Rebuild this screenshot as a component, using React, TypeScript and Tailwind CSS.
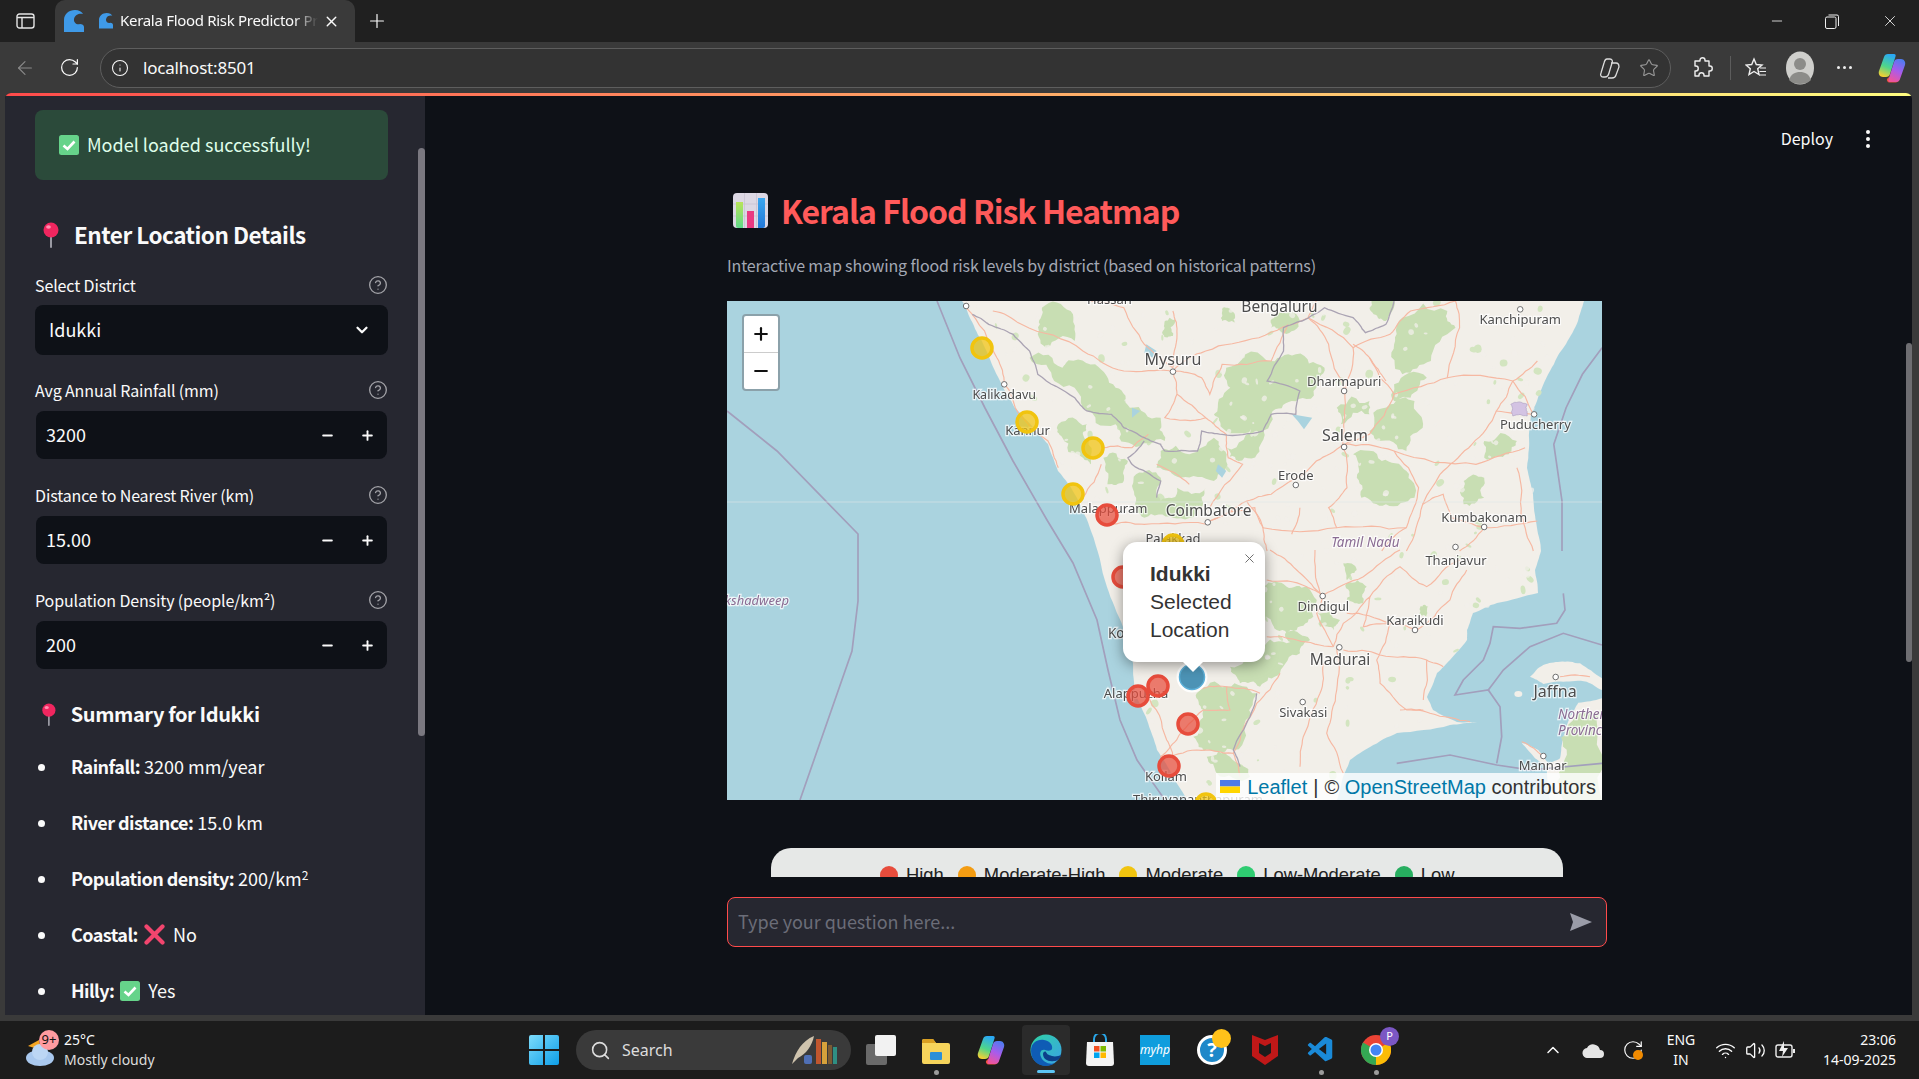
import { ArrowLeft, ChevronDown, ChevronUp, CircleHelp, Info, Minus, Plus, RotateCw, Search, Star, Volume2, Wifi, X } from "lucide-react";
import { VscVscode } from "react-icons/vsc";

type Pt = [number, number];

// two crops of the map were used to read coordinates, these put them back in map pixels
const a = (x: number, y: number): Pt => [233 + x / 2.442, y / 3];
const b = (x: number, y: number): Pt => [403 + x / 3, 249 + y / 3];
const parse = (s: string, f: (x: number, y: number) => Pt) =>
  s.split(" ").map((p) => {
    const [x, y] = p.split(",").map(Number);
    return f(x, y);
  });
const A = (s: string) => parse(s, a);
const B = (s: string) => parse(s, b);
const str = (p: Pt[]) => p.map(([x, y]) => `${x.toFixed(1)},${y.toFixed(1)}`).join(" ");

function rng(seed: number) {
  let s = seed;
  return () => (s = (s * 16807) % 2147483647) / 2147483647;
}

// wobble a straight outline so it reads like map data
function rough(p: Pt[], amp: number, seed: number, closed = true) {
  const r = rng(seed + 11);
  let out = p;
  for (let it = 0; it < 3; it++) {
    const next: Pt[] = [];
    for (let i = 0; i < out.length; i++) {
      const u = out[i];
      const v = out[(i + 1) % out.length];
      next.push(u);
      if (!closed && i === out.length - 1) break;
      const dx = v[0] - u[0];
      const dy = v[1] - u[1];
      const k = (r() - 0.5) * amp;
      next.push([(u[0] + v[0]) / 2 - dy * k, (u[1] + v[1]) / 2 + dx * k]);
    }
    out = next;
  }
  return str(out);
}

const land: Pt[] = [
  [235, 0], [239, 7], [247, 25], [258, 47], [268, 70], [278, 90], [288, 107], [307, 127], [321, 143], [331, 170], [350, 197], [364, 230],
  [380, 286], [396, 326], [406, 362], [408, 392], [420, 419], [430, 449], [446, 476], [460, 499],
  [610, 499], [616, 476], [623, 459], [643, 446], [670, 432], [723, 424], [750, 421], [730, 421], [706, 409], [700, 396], [710, 372], [723, 359], [740, 339], [740, 329], [746, 312], [770, 302], [811, 292], [808, 269],
  [814, 250], [810, 227], [806, 193], [800, 167], [802, 147], [804, 113], [810, 100], [823, 70], [839, 43], [851, 20], [857, 0],
];
const jaffna = B("1200,380 1240,345 1290,335 1350,340 1416,385 1416,420 1370,395 1300,395 1240,402");
const lanka = B("1416,445 1345,458 1320,500 1300,560 1290,625 1255,640 1225,600 1175,578 1215,625 1250,650 1260,750 1416,750");

const forests: Pt[][] = [
  A("170,170 250,200 330,190 380,260 415,320 490,350 500,420 420,430 380,370 300,320 230,240"),
  A("240,370 310,370 300,400 320,490 300,470 250,410"),
  A("200,20 270,30 280,120 210,140 195,70"),
  A("650,200 750,180 820,160 890,200 870,260 810,300 760,340 730,440 680,480 650,440 720,370 640,380 620,340 660,260"),
  A("490,450 560,460 620,410 650,470 620,540 540,530 480,500"),
  A("350,470 410,480 400,540 360,550"),
  A("430,520 490,530 490,600 530,560 600,560 590,620 520,650 450,650 430,590"),
  A("1080,50 1190,30 1210,80 1150,180 1080,220 1060,130"),
  A("1000,390 1050,310 1110,300 1130,380 1090,450 1020,420"),
  A("960,460 1030,480 1090,510 1110,590 1040,610 980,590 970,520"),
  A("920,320 1000,300 1000,340 930,370"),
  A("1060,250 1140,230 1100,290 1060,300"),
  A("1280,420 1360,420 1340,460 1280,470"),
  A("1230,540 1280,530 1280,590 1230,610"),
  A("500,60 525,55 520,105 495,100"),
  A("770,40 830,60 790,95 760,80"),
  A("640,25 665,30 670,65 640,60"),
  A("1005,0 1060,0 1040,60 1010,40"),
  B("400,110 470,110 530,110 550,200 500,240 440,240 400,200"),
  B("560,190 630,210 610,240 570,230"),
  B("640,40 680,60 650,90"),
  B("650,100 710,110 700,160 650,150"),
  B("470,245 520,270 500,290"),
  B("380,300 470,280 540,270 510,310 450,370 390,410 330,400 300,350"),
  B("200,430 290,410 380,430 360,500 310,600 240,600 190,560 220,480"),
  B("230,620 300,620 360,680 260,670"),
  B("1310,540 1416,480 1416,750 1300,750 1300,640"),
  B("870,170 895,170 890,200 870,195"),
];

const roadsA = [
  "15,20 90,170 110,250 135,320 215,420 240,500",
  "80,30 150,70 300,150 400,210 520,210",
  "520,210 530,280 600,350 650,400 655,470 690,490 610,620",
  "520,210 600,150 730,110 850,50 870,0",
  "520,210 590,230 610,280 640,190 760,180 800,70",
  "520,30 530,100 520,200",
  "320,0 400,20 450,130 520,200",
  "850,50 900,130 940,270 935,430 870,480 760,580 700,600 610,660",
  "850,50 960,140 1050,100 1100,30 1210,0",
  "960,140 940,270",
  "960,130 1000,170 1040,240",
  "1210,0 1220,80 1190,230 1060,280 1000,400 940,430",
  "1190,230 1350,240 1410,180",
  "1350,240 1310,330 1400,340",
  "1350,240 1400,340",
  "935,430 1060,450 1260,490 1380,440",
  "935,430 945,560 900,620 920,680 1090,680",
  "1060,450 1120,560 1090,680 1030,750",
  "1310,330 1250,430 1180,510 1130,610 1090,750",
  "1130,610 1180,580 1200,650 1280,680 1410,660",
  "1280,680 1220,750",
  "610,660 720,620 740,680 920,680",
  "700,600 740,680 750,750",
  "830,620 810,700",
  "350,440 420,440 460,400",
  "345,490 300,590",
  "360,670 450,670 600,670",
  "480,490 560,550",
  "1360,500 1370,640 1400,750",
  "600,350 500,350 530,280",
  "1060,280 1000,170",
];
const roadsB = [
  "410,90 530,110 580,135 700,80 810,0",
  "420,0 500,60 570,130 555,0",
  "580,135 560,190 610,290",
  "410,260 500,270 610,290",
  "610,290 640,220 720,140 700,230 780,220",
  "720,140 810,50 890,110 990,30",
  "650,190 780,220 860,240 960,150 1010,60",
  "780,220 740,330 750,400 830,480 880,480",
  "640,300 750,315 890,330 940,350",
  "620,290 620,420 590,550 640,670",
  "580,340 570,430 520,560 510,650",
  "450,370 380,460 310,610 200,600 90,620",
  "190,420 290,410 300,480 220,480 140,570 90,620",
  "290,410 390,430",
  "50,430 110,570 130,620",
  "1175,575 1240,620",
  "1290,380 1380,380",
  "810,480 900,490 1020,515",
  "890,330 880,450",
  "310,610 330,680",
];

const labels: [string, number, number, number, boolean?, string?][] = [
  ["Hassan", ...a(365, 8), 13],
  ["Bengaluru", ...a(780, 32), 15.5],
  ["Kanchipuram", ...a(1368, 68), 13],
  ["Mysuru", ...a(520, 192), 16],
  ["Dharmapuri", ...a(938, 255), 13],
  ["Kalikadavu", ...a(108, 295), 12.5],
  ["Kannur", ...a(165, 401), 13],
  ["Salem", ...a(940, 419), 16],
  ["Puducherry", ...a(1405, 384), 13],
  ["Erode", ...a(820, 536), 13],
  ["Malappuram", ...a(362, 636), 13],
  ["Coimbatore", ...a(607, 646), 15.5],
  ["Kumbakonam", ...a(1280, 664), 13],
  ["Palakkad", ...a(520, 727), 13],
  ["Tamil Nadu", ...a(990, 738), 13.5, true],
  ["Thanjavur", ...b(978, 44), 13],
  ["Dindigul", ...b(580, 183), 13],
  ["Karaikudi", ...b(855, 226), 13],
  ["Madurai", ...b(630, 344), 15.5],
  ["Sivakasi", ...b(520, 500), 13],
  ["Jaffna", ...b(1275, 442), 16],
  ["Northern", 831, 418, 13.5, true, "start"],
  ["Province", 831, 434, 13.5, true, "start"],
  ["Mannar", ...b(1238, 661), 13],
  ["Kollam", ...b(108, 693), 13],
  ["Alappuzha", 409, 397, 13],
  ["Kochi", 381, 337, 13.5, false, "start"],
  ["Lakshadweep", 62, 304, 13, true, "end"],
  ["Thiruvananthapuram", 406, 503, 13, false, "start"],
];

const towns: Pt[] = [
  a(520, 212), a(938, 270), a(938, 438), a(820, 552), a(108, 250), a(1402, 340), a(1280, 678), a(605, 664), a(15, 15), a(1368, 25), a(1210, 738),
  b(578, 138), b(855, 240), b(628, 292), b(518, 456), b(1277, 381), b(1240, 618),
];

// centres in page pixels, map starts at 727,301
const markers: [number, number, string][] = [
  [982, 348, "#f1c40f"],
  [1027, 422, "#f1c40f"],
  [1093, 448, "#f1c40f"],
  [1073, 494, "#f1c40f"],
  [1107, 515, "#e74c3c"],
  [1173, 545, "#f1c40f"],
  [1123, 577, "#e74c3c"],
  [1158, 686, "#e74c3c"],
  [1138, 696, "#e74c3c"],
  [1188, 724, "#e74c3c"],
  [1169, 766, "#e74c3c"],
  [1206, 804, "#f1c40f"],
];

function inLand(x: number, y: number) {
  let hit = false;
  for (let i = 0, j = land.length - 1; i < land.length; j = i++) {
    const [xi, yi] = land[i];
    const [xj, yj] = land[j];
    if (yi > y !== yj > y && x < ((xj - xi) * (y - yi)) / (yj - yi) + xi) hit = !hit;
  }
  return hit;
}

function specks(seed: number, count: number, size: number) {
  const r = rng(seed);
  const out: [number, number, number, number, number][] = [];
  for (let i = 0; i < count; i++) {
    const x = 240 + r() * 580;
    const y = r() * 499;
    const rx = 1 + r() * size;
    const ry = 1 + r() * size;
    const rot = r() * 180;
    if (inLand(x, y)) out.push([x, y, rx, ry, rot]);
  }
  return out;
}

function MapArt() {
  return (
    <svg width="875" height="499" viewBox="0 0 875 499" className="block">
      <defs>
        <filter id="soft" x="0" y="0" width="100%" height="100%">
          <feGaussianBlur stdDeviation="0.45" />
        </filter>
      </defs>
      <rect width="875" height="499" fill="#aad3df" />
      <g filter="url(#soft)">
        <polygon points={rough(land, 0.06, 3)} fill="#f2efe9" />
        <polygon points={rough(jaffna, 0.1, 5)} fill="#f2efe9" />
        <polygon points={rough(lanka, 0.06, 6)} fill="#f2efe9" />
        <ellipse cx={b(1165, 432)[0]} cy={b(1165, 432)[1]} rx="4" ry="3" fill="#f2efe9" />
        {specks(4242, 170, 3.4).map(([x, y, rx, ry, rot], i) => (
          <ellipse key={i} cx={x} cy={y} rx={rx} ry={ry} transform={`rotate(${rot} ${x} ${y})`} fill="#d3e5c0" />
        ))}
        {forests.map((f, i) => (
          <polygon key={i} points={rough(f, 0.48, i + 20)} fill="#c8deb3" />
        ))}
        {/* clearings, so the forest does not read as flat blobs */}
        {specks(977, 420, 2.2).map(([x, y, rx, ry, rot], i) => (
          <ellipse key={i} cx={x} cy={y} rx={rx} ry={ry} transform={`rotate(${rot} ${x} ${y})`} fill="#f2efe9" opacity="0.75" />
        ))}
        <g fill="#aad3df">
          <polygon points={str(A("455,130 480,150 470,170 450,155"))} />
          <polygon points={str(A("810,340 860,350 840,385 825,360"))} />
          <polygon points={str(A("420,320 440,330 420,350"))} />
          <polygon points={str(A("630,490 650,510 640,530 625,510"))} />
        </g>
        <g fill="none" stroke="#f6b8a2" strokeWidth="1.15">
          {roadsA.map((r, i) => (
            <polyline key={r} points={rough(A(r), 0.12, i + 50, false)} />
          ))}
          {roadsB.map((r, i) => (
            <polyline key={r} points={rough(B(r), 0.12, i + 90, false)} />
          ))}
        </g>
        <g fill="none" stroke="#a29fbc" strokeWidth="1.7">
          <polyline points="210,0 233,57 258,107 286,160 320,219 346,262 370,319 381,369 393,419 410,459 426,482 438,499" />
          <polyline points="0,110 50,150 131,233 131,300 125,350 73,499" />
          <polyline points={str(A("1568,140 1520,220 1480,320 1450,430 1470,600 1470,750"))} />
          <polyline points={str(B("1300,130 1305,180 1280,220 1170,235 1090,230 1080,280 1060,330 1000,390 975,435 1075,420 1110,470 1115,560 1100,640"))} />
          <polyline points={str(B("1075,420 1120,360 1200,290 1300,250 1416,285"))} />
          <polyline points={str(B("800,640 960,615 1100,645 1200,660 1416,640"))} />
        </g>
        <g fill="none" stroke="#aaa3b3" strokeWidth="1.3">
          <polyline points={rough(A("30,40 70,70 130,100 170,150 190,220 280,290 310,330 370,340 400,380 450,410 490,430 500,450 580,450 590,390 640,400 740,390 760,340 820,340 830,270 750,240 790,150 790,80 835,60 890,20 960,50 990,95 1040,70 1060,0"), 0.1, 7, false)} />
          <polyline points={rough(A("450,420 410,470 420,490 490,540 480,590"), 0.1, 8, false)} />
          <polyline points={rough(B("380,430 360,500 310,600 330,650"), 0.1, 9, false)} />
        </g>
        <g fill="#d3c3e3" stroke="#a99cc0" strokeWidth="0.6">
          <polygon points={rough(A("1345,310 1385,310 1385,345 1350,345"), 0.3, 10)} />
        </g>
        <line x1="0" y1="201" x2="875" y2="201" stroke="#dfe6e6" strokeWidth="1" opacity="0.6" />
        {labels.map(([t, x, y, s, i, anchor]) => (
          <text
            key={t}
            x={x}
            y={y}
            textAnchor={anchor ?? "middle"}
            fontFamily="Noto Sans, sans-serif"
            fontSize={s}
            fontStyle={i ? "italic" : "normal"}
            fill={i ? "#8a6c93" : "#4d4d4d"}
            stroke="#ffffff"
            strokeOpacity="0.75"
            strokeWidth="2.4"
            paintOrder="stroke"
          >
            {t}
          </text>
        ))}
        {towns.map(([x, y]) => (
          <circle key={`${x}-${y}`} cx={x} cy={y} r="2.8" fill="#fff" stroke="#6f6f6f" strokeWidth="1" />
        ))}
      </g>
      {markers.map(([x, y, c]) => (
        <circle key={`${x}-${y}`} cx={x - 727} cy={y - 301} r="10" fill={c} fillOpacity="0.72" stroke={c} strokeWidth="3.5" />
      ))}
      <circle cx={1192 - 727} cy={677 - 301} r="15.5" fill="#fff" fillOpacity="0.9" />
      <circle cx={1192 - 727} cy={677 - 301} r="12.5" fill="#4c93b5" stroke="#5cb0d8" strokeWidth="1.5" />
    </svg>
  );
}

function PinEmoji({ size = 24 }: { size?: number }) {
  return (
    <svg width={size * 0.75} height={size + 2} viewBox="0 0 18 26">
      <rect x="8" y="12" width="2" height="14" rx="1" fill="#9a9aa3" />
      <circle cx="9" cy="8" r="7.5" fill="#f0265f" />
      <ellipse cx="6.5" cy="5" rx="2.4" ry="1.8" fill="#ff8fb0" />
    </svg>
  );
}

function CheckEmoji() {
  return (
    <svg width="20" height="20" viewBox="0 0 20 20" className="shrink-0">
      <rect width="20" height="20" rx="2.5" fill="#66d38a" />
      <path d="M4.5 10.5 8.5 14 15.5 6.5" fill="none" stroke="#fff" strokeWidth="2.6" />
    </svg>
  );
}

function CrossEmoji() {
  return (
    <svg width="21" height="21" viewBox="0 0 21 21">
      <path d="M2.5 2.5 18.5 18.5M18.5 2.5 2.5 18.5" stroke="#f2456e" strokeWidth="4.2" strokeLinecap="round" />
    </svg>
  );
}

function ChartEmoji() {
  return (
    <svg width="35" height="35" viewBox="0 0 35 35">
      <rect width="35" height="35" rx="4" fill="#dcd8e4" />
      <path d="M11.5 0V35M23.5 0V35M0 11H35M0 23H35" stroke="#c8c3d2" strokeWidth="0.8" />
      <defs>
        <linearGradient id="bg1" x1="0" y1="0" x2="0" y2="1">
          <stop offset="0" stopColor="#b8e45a" />
          <stop offset="1" stopColor="#5fd98a" />
        </linearGradient>
        <linearGradient id="bg2" x1="0" y1="0" x2="0" y2="1">
          <stop offset="0" stopColor="#3ba8f0" />
          <stop offset="1" stopColor="#2278d8" />
        </linearGradient>
      </defs>
      <path d="M3 9h7v26H5a2 2 0 0 1-2-2z" fill="url(#bg1)" />
      <rect x="14" y="18" width="7" height="17" fill="#e93a82" />
      <path d="M25 5h7v28a2 2 0 0 1-2 2h-5z" fill="url(#bg2)" />
    </svg>
  );
}

function WaveIcon({ size }: { size: number }) {
  return (
    <svg width={size} height={size * 1.1} viewBox="0 0 20 22">
      <path d="M0 22V10C0 4 5 0 11 0c4 0 7 2 8 4-3-1-8 0-9 5-.5 4 3 6 6 5 2 0 4 1 4 3v5z" fill="#3f9ae8" />
    </svg>
  );
}

function CopilotMark() {
  return (
    <svg width="28" height="30" viewBox="0 0 28 30">
      <path d="M11 24h8c2 0 3 1 2.500 2.500-.5 1.500-2 3-4 3h-6c-2 0-3-2-2.500-3.500z" fill="#f0513a" />
      <path d="M10 1h6c1.500 0 2 1 1.500 2.500L12 21c-.5 2-2 3-4 3H5c-3 0-5-3-4-6L6 4c.5-2 2-3 4-3z" fill="url(#co1)" />
      <path d="M18 29h-6c-1.500 0-2-1-1.500-2.500L16 9c.5-2 2-3 4-3h3c3 0 5 3 4 6l-5 14c-.5 2-2 3-4 3z" fill="url(#co2)" />
    </svg>
  );
}

function NumberInput({ value }: { value: string }) {
  return (
    <div className="mt-[11px] ml-[1px] flex h-[48px] w-[351px] items-center rounded-[8px] bg-[#0e1117] pl-[10px] text-[18px]">
      <span className="flex-1 pb-[2px]">{value}</span>
      <Minus size={15} strokeWidth={3} className="mr-[25px]" />
      <Plus size={15} strokeWidth={3} className="mr-[12px]" />
    </div>
  );
}

function FieldLabel({ text, className }: { text: React.ReactNode; className: string }) {
  return (
    <div className={`flex h-[20px] items-center justify-between text-[16px] leading-[20px] tracking-[-0.13px] ${className}`}>
      <span className="pb-[1px]">{text}</span>
      <CircleHelp size={20} strokeWidth={1.6} className="text-[#a3a3a8]" />
    </div>
  );
}

function Bullet({ children }: { children: React.ReactNode }) {
  return (
    <div className="flex h-[56px] shrink-0 items-center text-[18px]">
      <span className="ml-[3px] mr-[26px] h-[7px] w-[7px] rounded-full bg-[#fafafa]" />
      <span className="flex items-center gap-[6px] pb-[1px]">{children}</span>
    </div>
  );
}

function Strong({ children }: { children: React.ReactNode }) {
  return <b className="font-semibold tracking-[-0.55px]">{children}</b>;
}

function Legend({ color, text, gap }: { color: string; text: string; gap: string }) {
  return (
    <div className={`flex items-start gap-[8px] ${gap}`}>
      <span className="mt-[18px] h-[18px] w-[18px] shrink-0 rounded-full" style={{ background: color }} />
      <span className="mt-[15px] text-[18.4px] leading-[24px] text-[#222]">{text}</span>
    </div>
  );
}

function TaskDot({ children, x, dot }: { children: React.ReactNode; x: string; dot?: boolean }) {
  return (
    <div className={`relative flex h-[40px] w-[40px] items-center justify-center ${x}`}>
      {children}
      {dot && <span className="absolute -bottom-[5px] h-[5px] w-[5px] rounded-full bg-[#9b9b9b]" />}
    </div>
  );
}

export default function App() {
  return (
    <div className="flex h-[1079px] w-[1919px] flex-col overflow-hidden bg-[#3a3a3a] font-['Noto_Sans_CJK_SC','Noto_Sans',sans-serif] text-[#fafafa]">
      {/* tab strip */}
      <div className="flex h-[42px] shrink-0 items-center bg-[#202020] font-['Noto_Sans',sans-serif]">
        <svg width="20" height="16" viewBox="0 0 20 16" className="ml-[16px]">
          <rect x="1" y="1" width="17" height="14" rx="2.5" fill="none" stroke="#e5e5e5" strokeWidth="1.4" />
          <path d="M1 4.5H18M6 4.5V15" stroke="#e5e5e5" strokeWidth="1.4" />
        </svg>
        <div className="ml-[19px] flex h-[42px] w-[300px] items-center rounded-t-[10px] bg-[#3a3a3a] pl-[9px]">
          <WaveIcon size={20} />
          <span className="ml-[15px]">
            <WaveIcon size={14} />
          </span>
          <span className="ml-[7px] w-[198px] overflow-hidden whitespace-nowrap pb-[2px] text-[15px] tracking-[-0.3px] [mask-image:linear-gradient(90deg,#000_88%,transparent)]">
            Kerala Flood Risk Predictor Project
          </span>
          <X size={17} className="ml-[5px]" />
        </div>
        <Plus size={22} strokeWidth={1.3} className="ml-[11px]" />
        <div className="ml-auto flex items-center">
          <Minus size={16} strokeWidth={1.2} className="mr-[40px]" />
          <svg width="14" height="15" viewBox="0 0 14 15" className="mr-[42px]">
            <rect x="0.5" y="3" width="10.5" height="11.5" rx="1.5" fill="none" stroke="#eee" />
            <path d="M3.5 1H12a1.5 1.5 0 0 1 1.5 1.5V12" fill="none" stroke="#eee" />
          </svg>
          <X size={18} strokeWidth={1.1} className="mr-[20px]" />
        </div>
      </div>

      {/* address bar */}
      <div className="flex h-[51px] shrink-0 items-center bg-[#3a3a3a] font-['Noto_Sans',sans-serif]">
        <ArrowLeft size={22} strokeWidth={1.2} className="ml-[14px] text-[#8a8a8a]" />
        <RotateCw size={21} strokeWidth={1.4} className="ml-[23px]" />
        <div className="ml-[20px] flex h-[40px] w-[1571px] items-center rounded-full border border-[#5e5e5e] bg-[#333333] pl-[10px]">
          <Info size={18} strokeWidth={1.4} />
          <span className="ml-[14px] text-[17px] tracking-[-0.2px]">localhost:8501</span>
          <svg width="22" height="22" viewBox="0 0 22 22" className="ml-auto mr-[18px]">
            <path d="M8 2h3c2 0 3 2 2 4l-3 10c-.5 2-2 4-4 4H4c-2 0-3-2-2-4L5 6c.5-2 1.500-4 3-4zM12 6h5c2 0 3 2 3 4l-3 8c-.5 2-2 3-4 3H9" fill="none" stroke="#ddd" strokeWidth="1.3" />
          </svg>
          <Star size={20} strokeWidth={1.3} className="mr-[11px] text-[#9a9a9a]" />
        </div>
        <svg width="20" height="22" viewBox="0 0 20 22" className="ml-[22px]">
          <path d="M7 3c0-3 5-3 5 0v1h4v5h1c3 0 3 5 0 5h-1v5h-5v-1c0-3-5-3-5 0v1H2v-5h1c3 0 3-5 0-5H2V4h5z" fill="none" stroke="#eee" strokeWidth="1.4" strokeLinejoin="round" />
        </svg>
        <span className="ml-[17px] h-[24px] w-px bg-[#5c5c5c]" />
        <svg width="22" height="22" viewBox="0 0 22 22" className="ml-[14px]">
          <path d="M9 2l2.300 5.500 5.700.5-4.300 3.700 1.300 5.800-5-3-5 3 1.300-5.800L1 8l5.700-.5z" fill="none" stroke="#eee" strokeWidth="1.4" />
          <path d="M15 11h6M14.500 14.500h6.500M14.500 18h6.500" stroke="#eee" strokeWidth="1.2" />
        </svg>
        <svg width="28" height="34" viewBox="0 0 28 34" className="ml-[19px]">
          <ellipse cx="14" cy="17" rx="14" ry="16.500" fill="#cfcfcc" />
          <circle cx="14" cy="13" r="6" fill="#8c8c89" />
          <path d="M3 29c2-6 6-8 11-8s9 2 11 8c-3 3-7 4-11 4s-8-1-11-4z" fill="#8c8c89" />
        </svg>
        <div className="ml-[23px] flex gap-[3px]">
          <span className="h-[3px] w-[3px] rounded-full bg-[#eee]" />
          <span className="h-[3px] w-[3px] rounded-full bg-[#eee]" />
          <span className="h-[3px] w-[3px] rounded-full bg-[#eee]" />
        </div>
        <svg width="28" height="30" viewBox="0 0 28 30" className="ml-[26px]">
          <defs>
            <linearGradient id="co1" x1="0.6" y1="0" x2="0.3" y2="1">
              <stop offset="0" stopColor="#2aa8f5" />
              <stop offset="0.55" stopColor="#4fd68a" />
              <stop offset="1" stopColor="#f7d031" />
            </linearGradient>
            <linearGradient id="co2" x1="0.7" y1="0" x2="0.3" y2="1">
              <stop offset="0" stopColor="#4f7cf0" />
              <stop offset="0.5" stopColor="#a85cec" />
              <stop offset="1" stopColor="#f0549a" />
            </linearGradient>
          </defs>
          <path d="M11 24h8c2 0 3 1 2.500 2.500-.5 1.500-2 3-4 3h-6c-2 0-3-2-2.500-3.500z" fill="#f0513a" />
          <path d="M10 1h6c1.500 0 2 1 1.500 2.500L12 21c-.5 2-2 3-4 3H5c-3 0-5-3-4-6L6 4c.5-2 2-3 4-3z" fill="url(#co1)" />
          <path d="M18 29h-6c-1.500 0-2-1-1.500-2.500L16 9c.5-2 2-3 4-3h3c3 0 5 3 4 6l-5 14c-.5 2-2 3-4 3z" fill="url(#co2)" />
        </svg>
      </div>

      {/* streamlit app */}
      <div className="relative ml-[5px] mb-[6px] mr-[7px] flex min-h-0 flex-1 flex-col overflow-hidden rounded-t-[6px] bg-[#0e1117]">
        <div className="h-[3px] shrink-0 bg-[linear-gradient(90deg,#ff4b4b,#fffd80)]" />
        <div className="flex min-h-0 flex-1">
          <aside className="flex w-[420px] shrink-0 overflow-hidden bg-[#262730]">
            <div className="w-[413px] pl-[30px] pr-[30px] pt-[14px]">
              <div className="flex h-[70px] items-center gap-[8px] rounded-[8px] bg-[#2b4a3a] pl-[24px] text-[18px] text-[#dffde9]">
                <CheckEmoji />
                <span className="pb-[1px]">Model loaded successfully!</span>
              </div>
              <div className="mt-[35px] flex h-[40px] items-center text-[22.5px] font-semibold tracking-[-0.5px]">
                <span className="ml-[7px] mr-[14px]">
                  <PinEmoji size={24} />
                </span>
                Enter Location Details
              </div>
              <FieldLabel text="Select District" className="mt-[20px]" />
              <div className="mt-[10px] flex h-[50px] items-center justify-between rounded-[8px] bg-[#0e1117] pl-[14px] pr-[17px] text-[18px]">
                <span className="pb-[1px]">Idukki</span>
                <ChevronDown size={18} strokeWidth={3} />
              </div>
              <FieldLabel text="Avg Annual Rainfall (mm)" className="mt-[25px]" />
              <NumberInput value="3200" />
              <FieldLabel text="Distance to Nearest River (km)" className="mt-[26px]" />
              <NumberInput value="15.00" />
              <FieldLabel text="Population Density (people/km²)" className="mt-[26px]" />
              <NumberInput value="200" />
              <div className="mt-[30px] flex h-[30px] items-center text-[20px] font-semibold tracking-[-0.4px]">
                <span className="ml-[6px] mr-[14px]">
                  <PinEmoji size={21} />
                </span>
                Summary for Idukki
              </div>
              <div className="mt-[10px] flex flex-col">
                <Bullet>
                  <span>
                    <Strong>Rainfall:</Strong> 3200 mm/year
                  </span>
                </Bullet>
                <Bullet>
                  <span>
                    <Strong>River distance:</Strong> 15.0 km
                  </span>
                </Bullet>
                <Bullet>
                  <span>
                    <Strong>Population density:</Strong> 200/km<sup className="text-[12px]">2</sup>
                  </span>
                </Bullet>
                <Bullet>
                  <Strong>Coastal:</Strong>
                  <CrossEmoji />
                  <span className="ml-[2px]">No</span>
                </Bullet>
                <Bullet>
                  <Strong>Hilly:</Strong>
                  <CheckEmoji />
                  <span className="ml-[2px]">Yes</span>
                </Bullet>
              </div>
            </div>
            <div className="w-[7px]">
              <div className="mt-[52px] h-[588px] w-[7px] rounded-full bg-[#7a7880]" />
            </div>
          </aside>

          <main className="relative flex-1 pl-[302px]">
            <div className="mt-[26px] flex h-[34px] items-center justify-end pr-[42px] text-[16px]">
              <span className="pb-[2px]">Deploy</span>
              <div className="ml-[33px] flex flex-col gap-[3px]">
                <span className="h-[4px] w-[4px] rounded-full bg-[#fafafa]" />
                <span className="h-[4px] w-[4px] rounded-full bg-[#fafafa]" />
                <span className="h-[4px] w-[4px] rounded-full bg-[#fafafa]" />
              </div>
            </div>
            <div className="mt-[32px] flex h-[44px] items-center pl-[6px] text-[32px] font-semibold tracking-[-1px] text-[#ff5a5a]">
              <ChartEmoji />
              <span className="ml-[13px]">Kerala Flood Risk Heatmap</span>
            </div>
            <div className="mt-[21px] h-[24px] text-[16px] leading-[24px] tracking-[-0.14px] text-[#a3a8b4]">
              Interactive map showing flood risk levels by district (based on historical patterns)
            </div>

            <div className="relative mt-[24px] h-[499px] w-[875px] overflow-hidden">
              <MapArt />
              <div className="absolute left-[15px] top-[13px] flex h-[77px] w-[38px] flex-col overflow-hidden rounded-[4px] border-2 border-[#8ba1aa] bg-white font-['Liberation_Sans',sans-serif] text-[#111]">
                <div className="flex h-[37px] items-center justify-center border-b border-[#ccc]">
                  <Plus size={20} strokeWidth={2.6} />
                </div>
                <div className="flex flex-1 items-center justify-center">
                  <Minus size={20} strokeWidth={2.6} />
                </div>
              </div>
              <div className="absolute left-[396px] top-[241px] h-[120px] w-[142px] rounded-[14px] bg-white pl-[27px] pt-[18px] font-['Liberation_Sans',sans-serif] text-[21px] leading-[28px] text-[#333] shadow-[0_3px_14px_rgba(0,0,0,0.4)]">
                <b>Idukki</b>
                <br />
                Selected
                <br />
                Location
                <X size={15} strokeWidth={1.5} className="absolute right-[8px] top-[9px] text-[#666]" />
              </div>
              <div className="absolute left-[456px] top-[361px] h-0 w-0 border-x-[10px] border-t-[10px] border-x-transparent border-t-white" />
              <div className="absolute bottom-0 right-0 flex h-[27px] w-[386px] items-center justify-end whitespace-nowrap bg-white/80 pr-[6px] font-['Liberation_Sans',sans-serif] text-[20px] text-[#333]">
                <svg width="20" height="13" viewBox="0 0 20 13" className="mr-[7px]">
                  <rect width="20" height="6.500" fill="#4c7be5" />
                  <rect y="6.500" width="20" height="6.500" fill="#ffd500" />
                </svg>
                <span className="text-[#0078a8]">Leaflet</span>
                <span className="mx-[6px]">|</span>
                <span>©&nbsp;</span>
                <span className="text-[#0078a8]">OpenStreetMap</span>
                <span>&nbsp;contributors</span>
              </div>
            </div>

            <div className="mt-[48px] ml-[44px] flex h-[29px] w-[792px] overflow-hidden rounded-t-[20px] bg-[#e6e8e7] pl-[109px] font-['Liberation_Sans',sans-serif]">
              <Legend color="#e74c3c" text="High" gap="mr-[14px]" />
              <Legend color="#f39c12" text="Moderate-High" gap="mr-[14px]" />
              <Legend color="#f1c40f" text="Moderate" gap="mr-[14px]" />
              <Legend color="#2ecc71" text="Low-Moderate" gap="mr-[14px]" />
              <Legend color="#27ae60" text="Low" gap="" />
            </div>

            <div className="mt-[20px] flex h-[50px] w-[880px] items-center justify-between rounded-[8px] border border-[#ff4b4b] bg-[#262730] pl-[10px] pr-[14px] text-[18px] text-[#6b6d78]">
              <span className="pb-[1px]">Type your question here...</span>
              <svg width="22" height="18" viewBox="0 0 22 18">
                <path d="M0 0 22 9 0 18l3-9z" fill="#9a9ca8" />
              </svg>
            </div>

            <div className="absolute right-0 top-[247px] h-[319px] w-[6px] rounded-full bg-[#6e6e72]" />
          </main>
        </div>
      </div>

      {/* taskbar */}
      <div className="flex h-[58px] shrink-0 items-center bg-[#1c1c1c] font-['Noto_Sans',sans-serif]">
        <div className="relative ml-[25px] h-[36px] w-[32px]">
          <svg width="32" height="36" viewBox="0 0 32 36">
            <path d="M3 14 14 8l2 10z" fill="#f5a623" />
            <ellipse cx="15" cy="26" rx="14" ry="8" fill="#a9c8ee" />
            <circle cx="15" cy="20" r="8" fill="#bcd6f4" />
          </svg>
          <span className="absolute left-[14px] top-[-2px] flex h-[20px] w-[20px] items-center justify-center rounded-full bg-[#ff9ba0] text-[13px] text-[#111]">9+</span>
        </div>
        <div className="ml-[7px] w-[110px] text-[14px] leading-[20px]">
          <div>25°C</div>
          <div className="text-[#ddd]">Mostly cloudy</div>
        </div>
        <svg width="30" height="30" viewBox="0 0 30 30" className="ml-[355px]">
          <defs>
            <linearGradient id="win" x1="0" y1="0" x2="1" y2="1">
              <stop offset="0" stopColor="#7ddcfb" />
              <stop offset="1" stopColor="#0d9ee8" />
            </linearGradient>
          </defs>
          <path d="M0 2a2 2 0 0 1 2-2h12v14H0zM16 0h12a2 2 0 0 1 2 2v12H16zM0 16h14v14H2a2 2 0 0 1-2-2zM16 16h14v12a2 2 0 0 1-2 2H16z" fill="url(#win)" />
        </svg>
        <div className="ml-[17px] flex h-[40px] w-[275px] items-center rounded-full bg-[#3a3a3a] pl-[14px] text-[16px] text-[#ddd]">
          <Search size={21} strokeWidth={1.8} />
          <span className="ml-[11px]">Search</span>
          <svg width="50" height="30" viewBox="0 0 50 30" className="ml-auto mr-[11px]">
            <path d="M2 29C6 16 12 6 24 1c-2 10-8 18-16 22z" fill="#cfc3ad" />
            <rect x="14" y="20" width="8" height="9" rx="2" fill="#4f6fb5" />
            <rect x="26" y="4" width="5" height="25" fill="#c0562e" />
            <rect x="32" y="7" width="5" height="22" fill="#d6a13b" />
            <rect x="38" y="10" width="4" height="19" fill="#7b5a33" />
            <rect x="43" y="12" width="4" height="17" fill="#2f8f83" />
          </svg>
        </div>
        <svg width="30" height="30" viewBox="0 0 30 30" className="ml-[15px]">
          <rect y="9" width="21" height="21" rx="2" fill="#6a6a6a" />
          <rect x="9" width="21" height="21" rx="2" fill="#f2f2f2" />
        </svg>
        <TaskDot x="ml-[20px]" dot>
          <svg width="30" height="28" viewBox="0 0 30 28">
            <path d="M1 5a2 2 0 0 1 2-2h9l3 4h12a2 2 0 0 1 2 2v17a2 2 0 0 1-2 2H3a2 2 0 0 1-2-2z" fill="#f6d45b" />
            <path d="M1 5a2 2 0 0 1 2-2h9l3 4H1z" fill="#d99f22" />
            <rect x="9" y="16" width="12" height="8" rx="1" fill="#2a8fd8" />
          </svg>
        </TaskDot>
        <TaskDot x="ml-[15px]">
          <CopilotMark />
        </TaskDot>
        <div className="relative ml-[11px] flex h-[50px] w-[48px] items-center justify-center rounded-[4px] bg-[#2b2b2b]">
          <svg width="32" height="32" viewBox="0 0 32 32">
            <defs>
              <linearGradient id="edge" x1="0" y1="0" x2="1" y2="1">
                <stop offset="0" stopColor="#2fd3a3" />
                <stop offset="1" stopColor="#3aa0e8" />
              </linearGradient>
            </defs>
            <circle cx="16" cy="16" r="15.500" fill="url(#edge)" />
            <path d="M1 17C1 8 8 5 14 6c6 1 9 5 8 9-1 2-4 2-7 1-4-1-6 3-4 7 2 5 8 8 14 6-3 2-6 3-9 3C8 32 1 26 1 17z" fill="#0f5cb5" />
            <path d="M13 20c0 5 5 8 11 7 3 0 6-2 7-6-2 1-6 2-9 1-4-1-5-2-6-4-1-1-3 0-3 2z" fill="#0c3f8a" />
          </svg>
          <span className="absolute bottom-[2px] h-[3px] w-[18px] rounded-full bg-[#5cc5f5]" />
        </div>
        <TaskDot x="ml-[10px]">
          <svg width="30" height="32" viewBox="0 0 30 32">
            <path d="M9 8V5a6 6 0 0 1 12 0v3" fill="none" stroke="#29a6e8" strokeWidth="2" />
            <path d="M2 8h26l1 21a3 3 0 0 1-3 3H4a3 3 0 0 1-3-3z" fill="#f4f4f4" />
            <rect x="9" y="12" width="5.500" height="5.500" fill="#f25022" />
            <rect x="15.500" y="12" width="5.500" height="5.500" fill="#7fba00" />
            <rect x="9" y="18.500" width="5.500" height="5.500" fill="#00a4ef" />
            <rect x="15.500" y="18.500" width="5.500" height="5.500" fill="#ffb900" />
          </svg>
        </TaskDot>
        <TaskDot x="ml-[15px]">
          <div className="flex h-[30px] w-[30px] items-center justify-center bg-[#0f9ddd] text-[12px] italic text-white">myhp</div>
        </TaskDot>
        <TaskDot x="ml-[17px]">
          <div className="relative flex h-[30px] w-[30px] items-center justify-center rounded-full border-[3px] border-white bg-[#1e88c9] text-[20px] font-bold text-white">
            ?
            <span className="absolute -right-[7px] -top-[9px] h-[19px] w-[19px] rounded-full bg-[#ffc21a]" />
          </div>
        </TaskDot>
        <TaskDot x="ml-[13px]">
          <svg width="26" height="30" viewBox="0 0 26 30">
            <path d="M0 0 13 5 26 0V21L13 30 0 21z" fill="#c01818" />
            <path d="M7 8 13 11 19 8V18L13 22 7 18z" fill="#1c1c1c" />
          </svg>
        </TaskDot>
        <TaskDot x="ml-[16px]" dot>
          <VscVscode size={30} className="text-[#1a8ad8]" />
        </TaskDot>
        <TaskDot x="ml-[15px]" dot>
          <div className="relative">
            <svg width="30" height="30" viewBox="0 0 30 30">
              <circle cx="15" cy="15" r="15" fill="#ea4335" />
              <path d="M15 15 2 7.500A15 15 0 0 0 15 30z" fill="#34a853" />
              <path d="M15 15V30A15 15 0 0 0 28 7.500z" fill="#fbbc05" />
              <circle cx="15" cy="15" r="7" fill="#fff" />
              <circle cx="15" cy="15" r="5.500" fill="#4285f4" />
            </svg>
            <span className="absolute -right-[8px] -top-[8px] flex h-[19px] w-[19px] items-center justify-center rounded-full bg-[#7b57c4] text-[11px] text-white">P</span>
          </div>
        </TaskDot>
        <ChevronUp size={20} strokeWidth={1.8} className="ml-[147px]" />
        <svg width="22" height="15" viewBox="0 0 22 15" className="ml-[19px]">
          <path d="M6 15a5 5 0 0 1-1-10 7 7 0 0 1 13 2 4 4 0 0 1 0 8z" fill="#e5e5e5" />
        </svg>
        <div className="relative ml-[18px] h-[22px] w-[22px]">
          <RotateCw size={22} strokeWidth={1.3} />
          <span className="absolute bottom-[1px] right-[1px] h-[10px] w-[10px] rounded-full bg-[#f08a00]" />
        </div>
        <div className="ml-[21px] w-[32px] text-center text-[14px] leading-[20px]">
          <div>ENG</div>
          <div>IN</div>
        </div>
        <Wifi size={21} strokeWidth={1.6} className="ml-[18px]" />
        <Volume2 size={21} strokeWidth={1.5} className="ml-[9px]" />
        <svg width="20" height="18" viewBox="0 0 20 18" className="ml-[9px]">
          <rect x="1" y="4" width="16" height="12" rx="2" fill="none" stroke="#eee" strokeWidth="1.4" />
          <rect x="18" y="8" width="2" height="4" fill="#eee" />
          <path d="M9 0 4 10h4l-1 6 6-9H9z" fill="#eee" />
        </svg>
        <div className="ml-auto mr-[23px] text-right text-[14px] leading-[20px]">
          <div>23:06</div>
          <div>14-09-2025</div>
        </div>
      </div>
    </div>
  );
}
